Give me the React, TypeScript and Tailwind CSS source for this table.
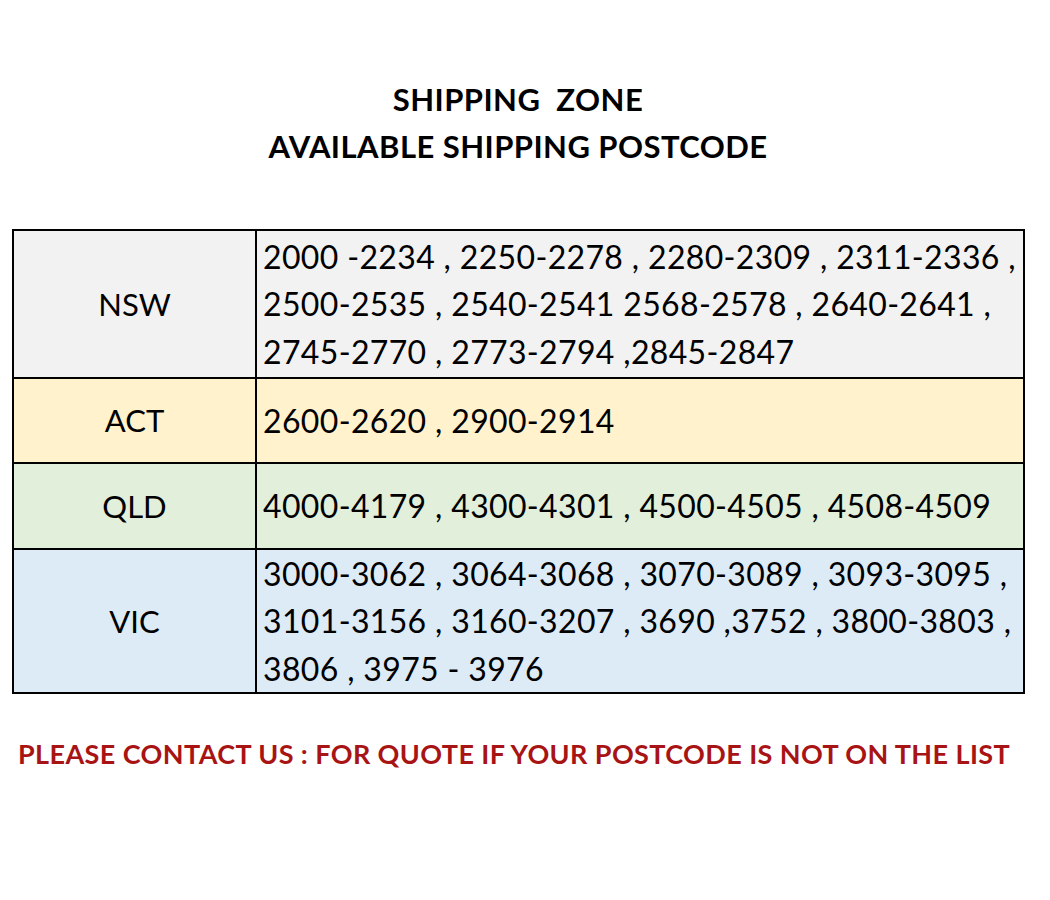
import React from 'react';

const zones = [
  {
    name: 'NSW',
    bg: 'bg-[#f2f2f2]',
    h: 'h-[146px]',
    lines: [
      '2000 -2234 , 2250-2278 , 2280-2309 , 2311-2336 ,',
      '2500-2535 , 2540-2541 2568-2578 , 2640-2641 ,',
      '2745-2770 , 2773-2794 ,2845-2847',
    ],
  },
  { name: 'ACT', bg: 'bg-[#fff2cc]', h: 'h-[85px]', lines: ['2600-2620 , 2900-2914'] },
  { name: 'QLD', bg: 'bg-[#e2efda]', h: 'h-[86px]', lines: ['4000-4179 , 4300-4301 , 4500-4505 , 4508-4509'] },
  {
    name: 'VIC',
    bg: 'bg-[#ddebf7]',
    h: 'h-[144px]',
    lines: [
      '3000-3062 , 3064-3068 , 3070-3089 , 3093-3095 ,',
      '3101-3156 , 3160-3207 , 3690 ,3752 , 3800-3803 ,',
      '3806 , 3975 - 3976',
    ],
  },
];

export default function App() {
  return (
    <div className="w-[1050px] h-[900px] bg-white text-black font-['Lato',sans-serif]">
      {/* heading */}
      <div className="pt-[76px] pr-[14px] flex flex-col items-center font-bold text-[31px] leading-[47px] tracking-[0.45px]">
        <div className="whitespace-pre">SHIPPING  ZONE</div>
        <div>AVAILABLE SHIPPING POSTCODE</div>
      </div>

      {/* zone table */}
      <div className="mt-[59px] ml-[12px] w-[1013px] border-2 border-black">
        {zones.map((z, i) => (
          <div
            key={z.name}
            className={`flex ${z.bg} ${z.h} ${i > 0 ? 'border-t-2 border-black' : ''}`}
          >
            <div className="w-[243px] shrink-0 border-r-2 border-black flex items-center justify-center text-[31px]">
              {z.name}
            </div>
            <div className="flex-1 flex flex-col justify-center pl-[6px] text-[32px] leading-[47.5px] whitespace-pre tracking-[0.35px]">
              {z.lines.map((l) => (
                <div key={l}>{l}</div>
              ))}
            </div>
          </div>
        ))}
      </div>

      {/* note */}
      <div className="mt-[40px] pl-[18px] font-bold text-[27px] text-[#a81414] tracking-[0.4px] whitespace-nowrap">
        PLEASE CONTACT US : FOR QUOTE IF YOUR POSTCODE IS NOT ON THE LIST
      </div>
    </div>
  );
}
